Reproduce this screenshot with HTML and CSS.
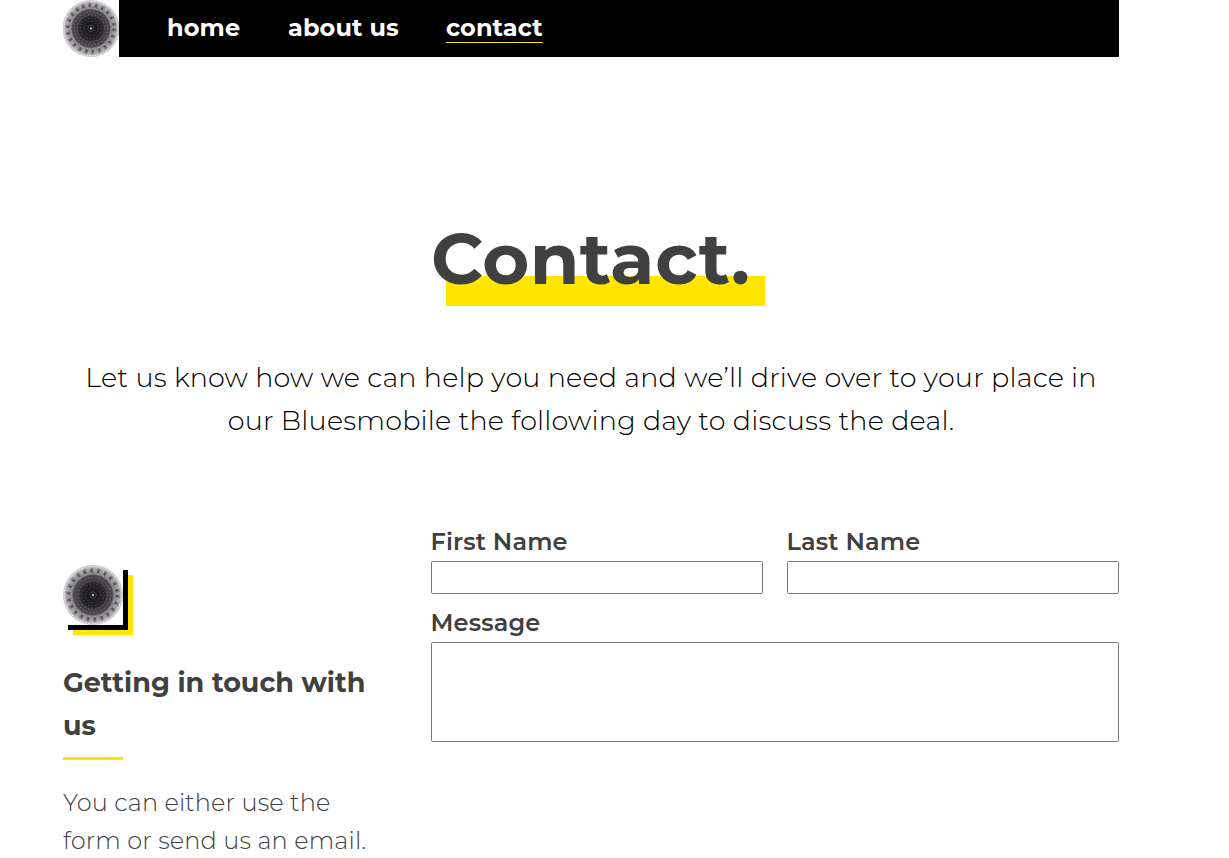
FILE: index.html
```html
<!DOCTYPE html>
<html lang="en">
<head>
<meta charset="utf-8">
<title>Contact</title>
<link rel="stylesheet" href="styles.css">
</head>
<body>
<svg class="defs" aria-hidden="true">
  <defs>
    <radialGradient id="shade">
      <stop offset="0" stop-color="#171618"/>
      <stop offset=".4" stop-color="#262427"/>
      <stop offset=".46" stop-color="#3c3a3d"/>
      <stop offset=".65" stop-color="#4c4a4d"/>
      <stop offset=".7" stop-color="#89868a"/>
      <stop offset=".85" stop-color="#a8a5a9"/>
      <stop offset="1" stop-color="#cbc9cc"/>
    </radialGradient>
    <symbol id="mandala" viewBox="0 0 60 60">
      <circle cx="30" cy="30" r="30" fill="url(#shade)"/>
      <g fill="none">
        <circle cx="30" cy="30" r="28.6" stroke="#dddbdf" stroke-width="1.4" stroke-dasharray="2 1"/>
        <circle cx="30" cy="30" r="24.5" stroke="#4c494f" stroke-width="5" stroke-dasharray="3 3.997" opacity=".45"/>
        <circle cx="30" cy="30" r="24" stroke="#333135" stroke-width="2.4" stroke-dasharray="2 4.854" opacity=".55"/>
        <circle cx="30" cy="30" r="22" stroke="#d0ced2" stroke-width="1.2" stroke-dasharray="1.4 4.883" opacity=".45"/>
        <circle cx="30" cy="30" r="17.5" stroke="#9a979c" stroke-width=".9" stroke-dasharray="1.2 2.465" opacity=".7"/>
        <circle cx="30" cy="30" r="14.5" stroke="#8a878c" stroke-width=".9" stroke-dasharray="1.2 2.596" opacity=".75"/>
        <circle cx="30" cy="30" r="11" stroke="#858287" stroke-width=".9" stroke-dasharray="1.2 2.256" opacity=".6"/>
        <circle cx="30" cy="30" r="7.5" stroke="#777479" stroke-width=".8" stroke-dasharray="1 1.4" opacity=".6"/>
        <circle cx="30" cy="30" r="3.2" stroke="#555257" stroke-width=".8"/>
      </g>
      <circle cx="30" cy="30" r="1.2" fill="#bbb8bd"/>
    </symbol>
  </defs>
</svg>
<div class="page">
  <header class="header">
    <svg class="logo" viewBox="0 0 56 57" preserveAspectRatio="none"><use href="#mandala" width="57" height="57" x="-.5"/></svg>
    <nav class="nav">
      <a class="link home">home</a>
      <a class="link about">about us</a>
      <a class="link current">contact</a>
    </nav>
  </header>
  <main>
    <section class="intro">
      <h1 class="title">Contact.</h1>
      <p class="lead">Let us know how we can help you need and we’ll drive over to your place in<br>our Bluesmobile the following day to discuss the deal.</p>
    </section>
    <div class="columns">
      <aside class="side">
        <svg class="badge"><use href="#mandala"/></svg>
        <h2 class="subtitle">Getting in touch with<br>us</h2>
        <p class="copy">You can either use the<br>form or send us an email.</p>
      </aside>
      <form class="form">
        <label class="field"><span class="label">First Name</span><input class="input" type="text"></label>
        <label class="field"><span class="label">Last Name</span><input class="input" type="text"></label>
        <label class="field wide"><span class="label">Message</span><textarea class="input area"></textarea></label>
      </form>
    </div>
  </main>
</div>
</body>
</html>
```
FILE: styles.css
```css
* { box-sizing: border-box; }
html { overflow: hidden; }
body { margin: 0; height: 858px; overflow: hidden; background: #fff; color: #404040; font-family: Montserrat, Inter, sans-serif; }
h1, h2, p { margin: 0; }
.defs { position: absolute; width: 0; height: 0; }
.page { width: 1056px; margin-left: 63px; }
.header { display: flex; height: 57px; }
.logo { flex: none; width: 56px; height: 57px; }
.nav { flex: 1; display: flex; align-items: flex-start; gap: 48px; padding: 13px 48px; background: #000; }
.link { height: 30px; line-height: 30px; font-size: 24px; font-weight: 700; letter-spacing: .1px; color: #fff; white-space: nowrap; border-bottom: 1px solid transparent; }
.home { width: 73px; }
.about { width: 110px; }
.current { width: 97px; border-color: #ffe600; }
.intro { display: flex; flex-direction: column; align-items: center; padding-top: 159px; }
.title { width: 333px; height: 90px; margin-left: 15px; line-height: 84px; font-size: 72px; font-weight: 700; letter-spacing: .35px; text-indent: -1px; white-space: nowrap; background: linear-gradient(#ffe600, #ffe600) 14px 60px / 319px 30px no-repeat; }
.lead { width: 100%; margin-top: 50px; text-align: center; font-size: 27px; font-weight: 300; letter-spacing: .2px; line-height: 43px; color: #000; white-space: nowrap; }
.columns { display: grid; grid-template-columns: 320px 688px; gap: 48px; margin-top: 81px; }
.side { padding-top: 42px; }
.badge { display: block; width: 60px; height: 60px; background: #fff; box-shadow: 5px 5px 0 #000, 10px 10px 0 #ffe600; }
.subtitle { margin-top: 36px; padding-bottom: 13px; font-size: 27px; font-weight: 700; line-height: 43px; white-space: nowrap; background: linear-gradient(#ffe600, #ffe600) left bottom / 60px 3px no-repeat; }
.copy { margin-top: 24px; font-size: 24px; font-weight: 300; letter-spacing: .15px; line-height: 38px; white-space: nowrap; }
.form { display: grid; grid-template-columns: 332px 332px; column-gap: 24px; row-gap: 10px; align-content: start; }
.field { display: block; }
.wide { grid-column: 1 / -1; }
.label { display: block; height: 38px; line-height: 38px; font-size: 24px; font-weight: 600; letter-spacing: .15px; text-indent: -.5px; }
.input { display: block; width: 100%; height: 33px; margin: 0; border: 1px solid #767676; border-radius: 1.5px; background: #fff; }
.area { height: 100px; resize: none; }
```
